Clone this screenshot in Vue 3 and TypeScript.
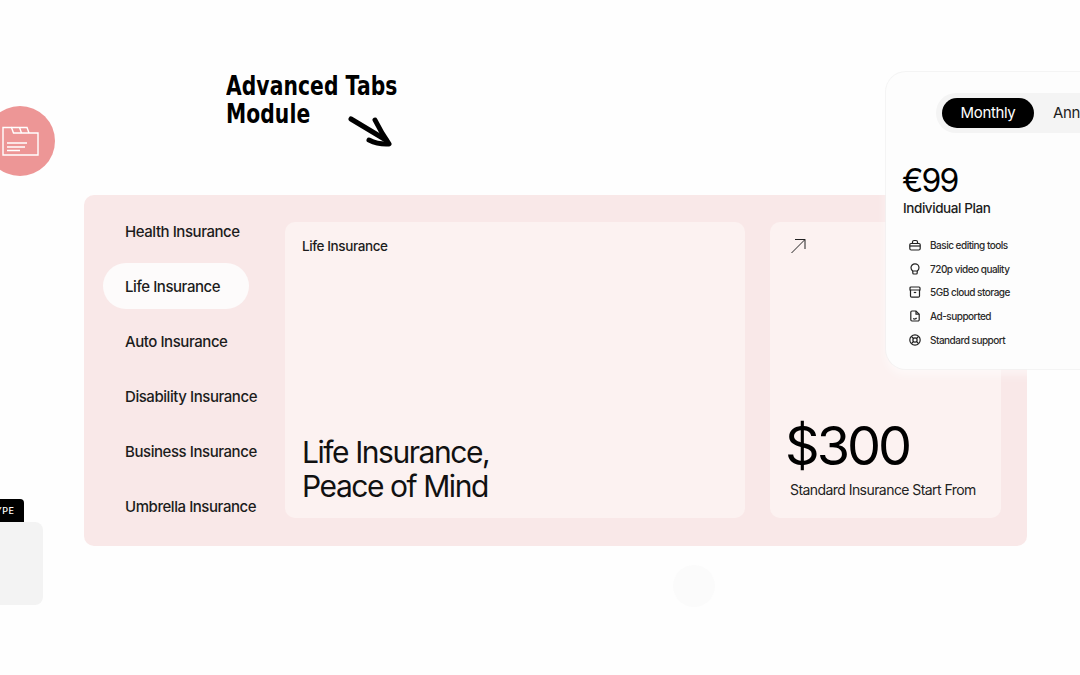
<script setup lang="ts">
const tabs = [
  'Health Insurance',
  'Life Insurance',
  'Auto Insurance',
  'Disability Insurance',
  'Business Insurance',
  'Umbrella Insurance',
];
const activeTab = 'Life Insurance';

const features = [
  {
    label: 'Basic editing tools',
    paths: ['M2 4.500h8a1.200 1.200 0 0 1 1.200 1.200v3.800a1.500 1.500 0 0 1-1.500 1.500H2.300A1.500 1.500 0 0 1 .8 9.500V5.700A1.200 1.200 0 0 1 2 4.500z', 'M3.500 4.500V3a1.500 1.500 0 0 1 1.500-1.500h2A1.500 1.500 0 0 1 8.500 3v1.500', 'M.8 7h10.400'],
  },
  {
    label: '720p video quality',
    paths: ['M2 4.800a4 4 0 0 1 8 0c0 1.500-.8 2.600-1.800 3.200H3.800C2.800 7.400 2 6.300 2 4.800z', 'M3.800 8v2a1 1 0 0 0 1 1h2.400a1 1 0 0 0 1-1V8'],
  },
  {
    label: '5GB cloud storage',
    paths: ['M2 1h8a1 1 0 0 1 1 1v2H1V2a1 1 0 0 1 1-1z', 'M1.500 4v6a1.200 1.200 0 0 0 1.200 1.200h6.600a1.200 1.200 0 0 0 1.200-1.200V4', 'M4.800 6.500h2.400'],
  },
  {
    label: 'Ad-supported',
    paths: ['M1.800 2.200A1.200 1.200 0 0 1 3 1h4l3.200 3.200v5.600A1.200 1.200 0 0 1 9 11H3a1.200 1.200 0 0 1-1.200-1.200z', 'M7 1v3.200h3.200', 'M4.200 8.500c1 .8 2.400.8 3.400-.6'],
  },
  {
    label: 'Standard support',
    paths: ['M6 .8a5.200 5.200 0 1 0 0 10.400A5.200 5.200 0 0 0 6 .8z', 'M6 3.900a2.100 2.100 0 1 0 0 4.200 2.100 2.100 0 0 0 0-4.200z', 'M2.400 2.400l2.100 2.100M9.600 2.400L7.500 4.500M2.400 9.600l2.100-2.100M9.600 9.600L7.500 7.500'],
  },
];
</script>

<template>
  <div class="page">
    <!-- Section note -->
    <div class="note">
      <p class="note-text">Advanced Tabs<br />Module</p>
      <svg class="note-arrow" width="46" height="34" viewBox="0 0 46 34" fill="none">
        <path d="M3 5L38 26" stroke="#000" stroke-width="5" stroke-linecap="round" />
        <path d="M27 6c4 8 8 15 14 24-7 .5-13-.5-20-4" stroke="#000" stroke-width="5" stroke-linecap="round" stroke-linejoin="round" />
      </svg>
    </div>

    <!-- Tabs module -->
    <section class="panel">
      <nav class="tabs">
        <div v-for="tab in tabs" :key="tab" class="tab" :class="{ active: tab === activeTab }">{{ tab }}</div>
      </nav>
      <div class="content">
        <div class="card card-main">
          <h3 class="card-label">Life Insurance</h3>
          <p class="card-headline">Life Insurance,<br />Peace of Mind</p>
        </div>
        <div class="card card-price">
          <svg width="16" height="16" viewBox="0 0 16 16" fill="none" stroke="#222" stroke-width="1">
            <path d="M1.500 15L15 1.500M5 1.500h10V11" />
          </svg>
          <div>
            <div class="price">$300</div>
            <div class="price-note">Standard Insurance Start From</div>
          </div>
        </div>
      </div>
    </section>

    <!-- Floating decorations -->
    <div class="badge">
      <svg width="38" height="30" viewBox="0 0 38 30" fill="none" stroke="#fff" stroke-width="1.400">
        <path d="M2 29V1.500h8.500l2 5.500H37v22z" />
        <path d="M10.500 1.500H26l2 5.500M18.500 1.500l2 5.500" />
        <path d="M6 17h20M6 21h18M6 24.500h13" />
      </svg>
    </div>
    <div class="faint-dot"></div>
    <div class="type-tag">TYPE</div>
    <div class="type-box"></div>

    <!-- Pricing card -->
    <aside class="pricing">
      <div class="toggle">
        <span class="toggle-on">Monthly</span>
        <span class="toggle-off">Annually</span>
      </div>
      <div class="plan-price">€99</div>
      <div class="plan-name">Individual Plan</div>
      <ul class="features">
        <li v-for="item in features" :key="item.label" class="feature">
          <svg width="12" height="12" viewBox="0 0 12 12" fill="none" stroke="#222" stroke-width="1.200">
            <path v-for="d in item.paths" :key="d" :d="d" />
          </svg>
          <span>{{ item.label }}</span>
        </li>
      </ul>
    </aside>
  </div>
</template>

<style>
html,
body {
  margin: 0;
  background: #fff;
  overflow: hidden;
}
</style>

<style scoped>
.page {
  position: relative;
  width: 1080px;
  height: 675px;
  overflow: hidden;
  box-sizing: border-box;
  padding: 195px 53px 0 84px;
  background: #fefefe;
  font-family: Inter, "Liberation Sans", sans-serif;
  color: #1c1c1c;
}

.note {
  position: absolute;
  left: 226px;
  top: 72px;
}

.note-text {
  margin: 0;
  font-family: "DejaVu Sans", sans-serif;
  font-size: 26px;
  font-weight: 700;
  line-height: 28px;
  letter-spacing: 0.100px;
  color: #000;
  white-space: nowrap;
  transform: scaleX(0.78);
  transform-origin: left top;
}

.note-arrow {
  position: absolute;
  left: 122px;
  top: 42px;
}

.panel {
  display: flex;
  height: 351px;
  box-sizing: border-box;
  padding: 13px 26px 0 19px;
  border-radius: 10px;
  background: #f9e8e8;
}

.tabs {
  display: flex;
  flex-direction: column;
  gap: 9px;
  width: 182px;
  flex-shrink: 0;
}

.tab {
  align-self: flex-start;
  height: 46px;
  line-height: 47px;
  padding: 0 29px 0 22px;
  border-radius: 23px;
  font-size: 15px;
  font-weight: 500;
  letter-spacing: -0.440px;
  white-space: nowrap;
}

.tab.active {
  background: #fdfbfb;
}

.content {
  display: flex;
  flex: 1;
  min-width: 0;
  gap: 25px;
  height: 296px;
  margin-top: 14px;
}

.card {
  display: flex;
  flex-direction: column;
  justify-content: space-between;
  box-sizing: border-box;
  border-radius: 10px;
  background: #fcf2f1;
}

.card-main {
  width: 460px;
  padding: 15px 17px 15px;
}

.card-label {
  margin: 0;
  font-size: 13.500px;
  font-weight: 500;
  line-height: 19px;
  letter-spacing: -0.400px;
}

.card-headline {
  margin: 0;
  font-size: 30px;
  font-weight: 400;
  line-height: 34px;
  letter-spacing: -1.450px;
  color: #111;
}

.card-price {
  flex: 1;
  min-width: 0;
  padding: 16px 20px 20px 20px;
}

.price {
  margin-left: -5px;
  font-size: 54px;
  font-weight: 400;
  line-height: 58px;
  letter-spacing: -3px;
  color: #000;
}

.price-note {
  margin-top: 6px;
  font-size: 14px;
  font-weight: 400;
  line-height: 17px;
  letter-spacing: -0.560px;
  white-space: nowrap;
  color: #222;
}

.badge {
  position: absolute;
  left: -15px;
  top: 106px;
  display: flex;
  align-items: center;
  justify-content: center;
  width: 70px;
  height: 70px;
  border-radius: 50%;
  background: #ed9696;
}

.faint-dot {
  position: absolute;
  left: 673px;
  top: 565px;
  width: 42px;
  height: 42px;
  border-radius: 50%;
  background: #fbfbfb;
}

.type-tag {
  position: absolute;
  left: -16px;
  top: 499px;
  width: 40px;
  height: 23px;
  box-sizing: border-box;
  padding: 5px 0 0 5px;
  border-radius: 4px 4px 0 0;
  background: #000;
  color: #fff;
  font-size: 9px;
  font-weight: 500;
  line-height: 13px;
  letter-spacing: 0.500px;
}

.type-box {
  position: absolute;
  left: -40px;
  top: 522px;
  width: 83px;
  height: 83px;
  border-radius: 8px;
  background: #f3f3f3;
}

.pricing {
  position: absolute;
  left: 886px;
  top: 72px;
  width: 260px;
  height: 297px;
  box-sizing: border-box;
  padding: 21px 0 0 17px;
  border-radius: 20px;
  background: #fdfdfd;
  box-shadow: 0 0 0 1px rgba(240, 240, 240, 0.7), 0 6px 10px rgba(255, 255, 255, 0.55);
}

.toggle {
  display: flex;
  align-items: center;
  gap: 19px;
  width: 240px;
  height: 40px;
  box-sizing: border-box;
  margin-left: 33px;
  padding: 0 6px;
  border-radius: 20px;
  background: #f4f4f4;
  font-size: 15px;
  line-height: 30px;
  letter-spacing: -0.350px;
}

.toggle-on {
  width: 92px;
  height: 30px;
  flex-shrink: 0;
  border-radius: 15px;
  background: #000;
  color: #fff;
  text-align: center;
}

.toggle-off {
  white-space: nowrap;
}

.plan-price {
  margin: 29px 0 0 -1px;
  font-size: 32px;
  line-height: 38px;
  letter-spacing: -1.800px;
  color: #000;
}

.plan-name {
  font-size: 13.500px;
  font-weight: 500;
  line-height: 17px;
  letter-spacing: -0.420px;
}

.features {
  display: flex;
  flex-direction: column;
  gap: 11.700px;
  margin: 22px 0 0;
  padding: 0 0 0 6px;
  list-style: none;
}

.feature {
  display: flex;
  align-items: center;
  gap: 9px;
  height: 12px;
  font-size: 10px;
  font-weight: 500;
  letter-spacing: -0.500px;
  color: #2a2a2a;
}
</style>
